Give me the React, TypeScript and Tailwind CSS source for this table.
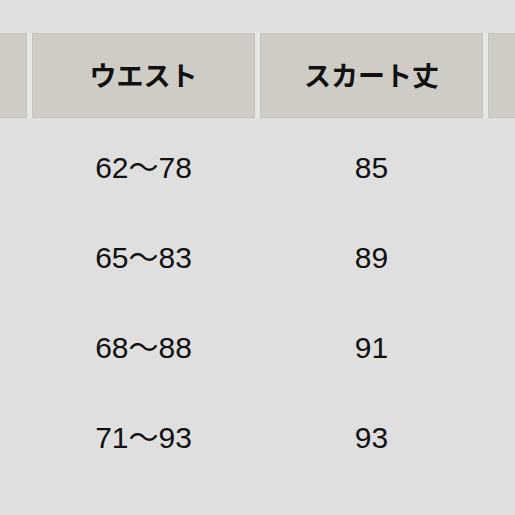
const headers = ["", "ウエスト", "スカート丈", ""];

const rows = [
  ["", "62〜78", "85", ""],
  ["", "65〜83", "89", ""],
  ["", "68〜88", "91", ""],
  ["", "71〜93", "93", ""],
];

export default function App() {
  return (
    <div className="w-[515px] h-[515px] overflow-hidden bg-[#dfdfdf] text-[#111]">
      <div className="ml-[-196px] pt-[33px] w-max">
        <div className="flex gap-[5px] bg-[#e7e7e5]">
          {headers.map((h, i) => (
            <div
              key={i}
              className="w-[223px] h-[85px] shrink-0 flex items-center justify-center bg-[#cfccc6] border border-[#c5c3bd] text-[27px] font-bold"
              style={{ fontFamily: '"Noto Sans CJK JP", sans-serif' }}
            >
              {h}
            </div>
          ))}
        </div>
        <div className="pt-[4px]">
          {rows.map((r, ri) => (
            <div key={ri} className="flex gap-[5px] h-[90px]">
              {r.map((c, ci) => (
                <div
                  key={ci}
                  className="w-[223px] shrink-0 flex items-center justify-center text-[30px]"
                  style={{ fontFamily: '"Liberation Sans", "Noto Sans CJK JP", sans-serif' }}
                >
                  {c}
                </div>
              ))}
            </div>
          ))}
        </div>
      </div>
    </div>
  );
}
